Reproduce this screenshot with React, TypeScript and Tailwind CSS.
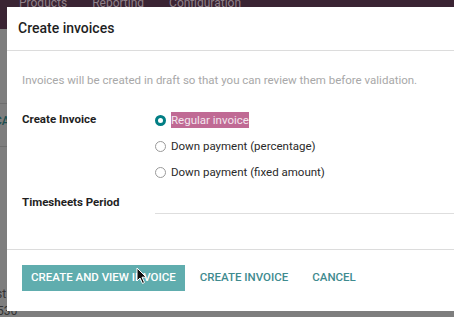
const font = { fontFamily: "Roboto, 'Noto Sans', sans-serif" };

function Radio({ checked, label, selected }: { checked?: boolean; label: string; selected?: boolean }) {
  return (
    <div className="flex h-[26px] items-center">
      {checked ? (
        <span className="box-border h-[11px] w-[11px] rounded-full border-[3px] border-[#017e84] bg-white" />
      ) : (
        <span className="box-border h-[11px] w-[11px] rounded-full border border-[#9a9a9a] bg-white" />
      )}
      <span
        className={
          selected
            ? "ml-[5px] bg-[#c06a94] text-[11.5px] leading-[16px] text-[#f3e6ee]"
            : "ml-[5px] text-[11.5px] leading-[16px] text-[#2a2a2a]"
        }
      >
        {label}
      </span>
    </div>
  );
}

export default function App() {
  return (
    <div className="relative h-[317px] w-[454px] overflow-hidden bg-[#7e7e7e]" style={font}>
      {/* page behind the dialog */}
      <div className="relative h-[29px] bg-[#3a2433]">
        <div className="absolute left-[19px] top-[-6px] flex gap-[25px] text-[12px] text-[#8f8189]">
          <span>Products</span>
          <span>Reporting</span>
          <span>Configuration</span>
        </div>
      </div>
      <div className="absolute left-0 top-[103px] h-px w-[7px] bg-[#6e6e6e]" />
      <div className="absolute left-[-6px] top-[112px] text-[12px] font-medium text-[#1d4f50]">CA</div>
      <div className="absolute left-0 top-[146px] h-px w-[7px] bg-[#6e6e6e]" />
      <div className="absolute left-[-4px] top-[285px] text-[12px] text-[#333]">st</div>
      <div className="absolute left-[-3px] top-[302px] text-[12px] text-[#333]">536</div>

      {/* dialog */}
      <div className="absolute left-[7px] top-[7px] flex h-[304px] w-[700px] flex-col bg-white">
        <div className="flex h-[44px] items-center border-b border-[#dcdcdc] px-[11px]">
          <h4 className="text-[14px] font-medium text-[#1f1f1f]">Create invoices</h4>
        </div>

        <div className="flex-1 px-[15px]">
          <p className="mt-[20px] text-[11.5px] leading-[18px] text-[#a8a8a8]">
            Invoices will be created in draft so that you can review them before validation.
          </p>

          <div className="mt-[18px] flex">
            <div className="flex h-[26px] w-[133px] items-center text-[11.5px] font-bold text-[#1f1f1f]">
              Create Invoice
            </div>
            <div className="flex flex-col">
              <Radio checked selected label="Regular invoice" />
              <Radio label="Down payment (percentage)" />
              <Radio label="Down payment (fixed amount)" />
            </div>
          </div>

          <div className="mt-[5px] flex">
            <div className="flex h-[26px] w-[133px] items-center text-[11.5px] font-bold text-[#1f1f1f]">
              Timesheets Period
            </div>
            <div className="h-[24px] flex-1 border-b border-[#dedede]" />
          </div>
        </div>

        <div className="flex h-[62px] gap-[6px] border-t border-[#dcdcdc] px-[15px] pt-[15px]">
          <button className="relative h-[26px] bg-[#60adae] px-[9px] text-[11.5px] font-medium uppercase text-white">
            Create and view invoice
            <svg
              className="absolute left-[114px] top-[2px]"
              width="12"
              height="18"
              viewBox="0 0 12 18"
            >
              <path d="M1 1 L1 14 L4 11 L6.5 16.5 L8.5 15.5 L6 10.2 L10.2 10.2 Z" fill="#111" stroke="#fff" strokeWidth="1" />
            </svg>
          </button>
          <button className="h-[26px] px-[9px] text-[11.5px] font-medium uppercase text-[#3f8b8f]">
            Create invoice
          </button>
          <button className="h-[26px] px-[9px] text-[11.5px] font-medium uppercase text-[#3f8b8f]">
            Cancel
          </button>
        </div>
      </div>
    </div>
  );
}
